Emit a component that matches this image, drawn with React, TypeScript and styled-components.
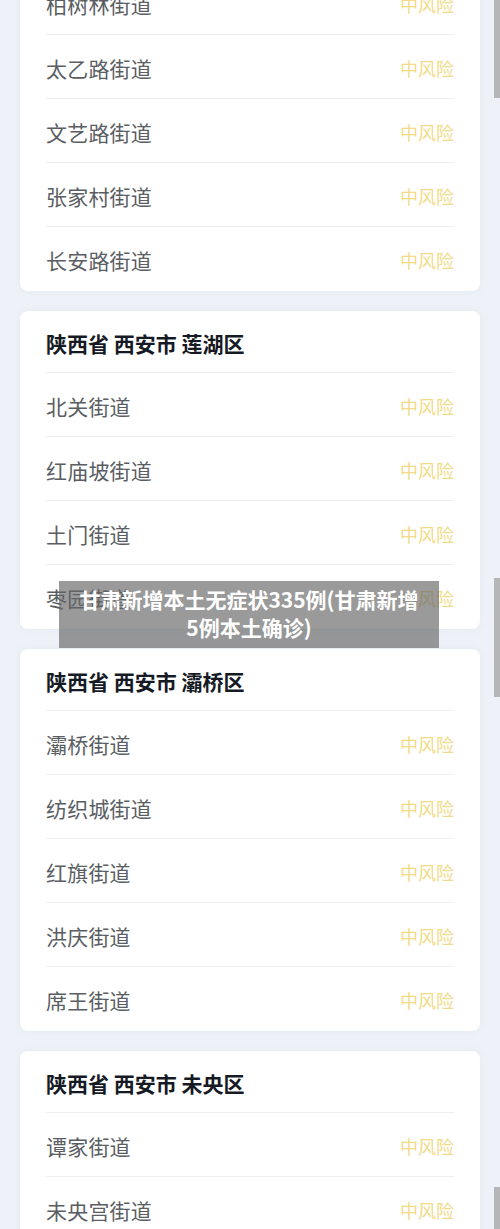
import React from "react";
import styled, { createGlobalStyle } from "styled-components";

const GlobalStyle = createGlobalStyle`
  html, body {
    margin: 0;
    padding: 0;
    background: #eef2f8;
  }
  body {
    font-family: "Noto Sans CJK SC", "Noto Sans", sans-serif;
    overflow: hidden;
  }
`;

const Page = styled.div`
  position: relative;
  width: 500px;
  height: 1229px;
  overflow: hidden;
  background: #eef2f8;
  box-sizing: border-box;
  padding: 0 20px;
`;

const Stack = styled.div<{ $offset: number }>`
  display: flex;
  flex-direction: column;
  gap: 20px;
  margin-top: ${(p) => p.$offset}px;
`;

const Card = styled.section`
  display: flex;
  flex-direction: column;
  background: #ffffff;
  border-radius: 8px;
  padding: 0 26px;
  box-shadow: 0 0 6px rgba(200, 210, 225, 0.25);
`;

const Header = styled.h2`
  margin: 0;
  display: flex;
  align-items: center;
  box-sizing: border-box;
  height: 62px;
  padding-top: 2px;
  font-size: 21px;
  font-weight: 700;
  color: #151a24;
  border-bottom: 1px solid #eceef2;
`;

const Row = styled.div`
  display: flex;
  align-items: center;
  justify-content: space-between;
  box-sizing: border-box;
  height: 64px;
  padding-top: 2px;
  border-bottom: 1px solid #eceef2;

  &:last-child {
    border-bottom: none;
  }
`;

const Name = styled.span`
  font-size: 21px;
  color: #5a5e63;
  letter-spacing: 0.2px;
`;

const Risk = styled.span`
  font-size: 18px;
  color: #f1db86;
`;

const Banner = styled.div`
  position: absolute;
  top: 581px;
  left: 59px;
  width: 380px;
  height: 67px;
  box-sizing: border-box;
  padding: 4px 16px 0;
  background: rgba(100, 100, 100, 0.65);
  color: #ffffff;
  font-size: 21px;
  font-weight: 700;
  line-height: 28px;
  text-align: center;
`;

const ScrollThumb = styled.div<{ $top: number; $height: number }>`
  position: absolute;
  right: 0;
  width: 6px;
  top: ${(p) => p.$top}px;
  height: ${(p) => p.$height}px;
  background: #b5b6b8;
`;

type Area = { title?: string; streets: string[] };

const areas: Area[] = [
  {
    streets: ["柏树林街道", "太乙路街道", "文艺路街道", "张家村街道", "长安路街道"],
  },
  {
    title: "陕西省 西安市 莲湖区",
    streets: ["北关街道", "红庙坡街道", "土门街道", "枣园街道"],
  },
  {
    title: "陕西省 西安市 灞桥区",
    streets: ["灞桥街道", "纺织城街道", "红旗街道", "洪庆街道", "席王街道"],
  },
  {
    title: "陕西省 西安市 未央区",
    streets: ["谭家街道", "未央宫街道", "汉城街道"],
  },
];

export default function App() {
  return (
    <>
      <GlobalStyle />
      <Page>
        <Stack $offset={-29}>
          {areas.map((a, i) => (
            <Card key={i}>
              {a.title && <Header>{a.title}</Header>}
              {a.streets.map((s) => (
                <Row key={s}>
                  <Name>{s}</Name>
                  <Risk>中风险</Risk>
                </Row>
              ))}
            </Card>
          ))}
        </Stack>
        <Banner>甘肃新增本土无症状335例(甘肃新增5例本土确诊)</Banner>
        <ScrollThumb $top={0} $height={98} />
        <ScrollThumb $top={578} $height={119} />
        <ScrollThumb $top={1187} $height={42} />
      </Page>
    </>
  );
}
